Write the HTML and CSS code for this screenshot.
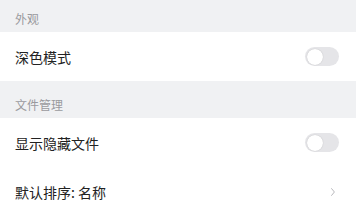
FILE: index.html
```html
<!DOCTYPE html>
<html lang="zh-CN">

<head>
    <meta charset="UTF-8">
    <meta name="viewport" content="width=device-width, initial-scale=1.0">
    <title>设置</title>
    <link rel="stylesheet" href="styles.css">
</head>

<body>
    <div class="settings">
        <!-- Appearance -->
        <div class="section-title">外观</div>
        <div class="setting-row">
            <span class="label">深色模式</span>
            <span class="switch"><span class="knob"></span></span>
        </div>

        <!-- Files -->
        <div class="section-title">文件管理</div>
        <div class="setting-row">
            <span class="label">显示隐藏文件</span>
            <span class="switch"><span class="knob"></span></span>
        </div>
        <div class="setting-row">
            <span class="label">默认排序: 名称</span>
            <svg class="chevron" width="4" height="8" viewBox="0 0 4 8">
                <path d="M0.6 0.6 L3.4 4 L0.6 7.4" fill="none" stroke="#b8b8bc" stroke-width="1" stroke-linecap="round" stroke-linejoin="round"/>
            </svg>
        </div>
    </div>
</body>

</html>
```

FILE: styles.css
```css
/* Reset */
* {
    margin: 0;
    padding: 0;
    box-sizing: border-box;
}

:root {
    --bg: #f0f1f3;
    --muted: #9a9a9e;
    --text: #222222;
    --track: #e5e5e8;
}

body {
    font-family: 'Noto Sans CJK SC', sans-serif;
    background: var(--bg);
    width: 356px;
    height: 200px;
    overflow: hidden;
}

/* page is scrolled a few pixels */
.settings {
    margin-top: -5px;
}

.section-title {
    padding: 17px 15px 7px;
    font-size: 12px;
    line-height: 13px;
    color: var(--muted);
}

.setting-row {
    display: flex;
    align-items: center;
    justify-content: space-between;
    height: 49px;
    padding: 0 15px 0 15px;
    background: #fff;
}

.label {
    font-size: 14px;
    color: var(--text);
}

/* Toggle switch (off) */
.switch {
    position: relative;
    width: 34px;
    height: 19px;
    margin-right: 2px;
    border-radius: 10px;
    background: var(--track);
}

.switch .knob {
    position: absolute;
    top: 1.5px;
    left: 1.5px;
    width: 16px;
    height: 16px;
    border-radius: 50%;
    background: #fff;
    box-shadow: 0 0 1px rgba(0, 0, 0, 0.25);
}

.chevron {
    margin-right: 6px;
}
```
